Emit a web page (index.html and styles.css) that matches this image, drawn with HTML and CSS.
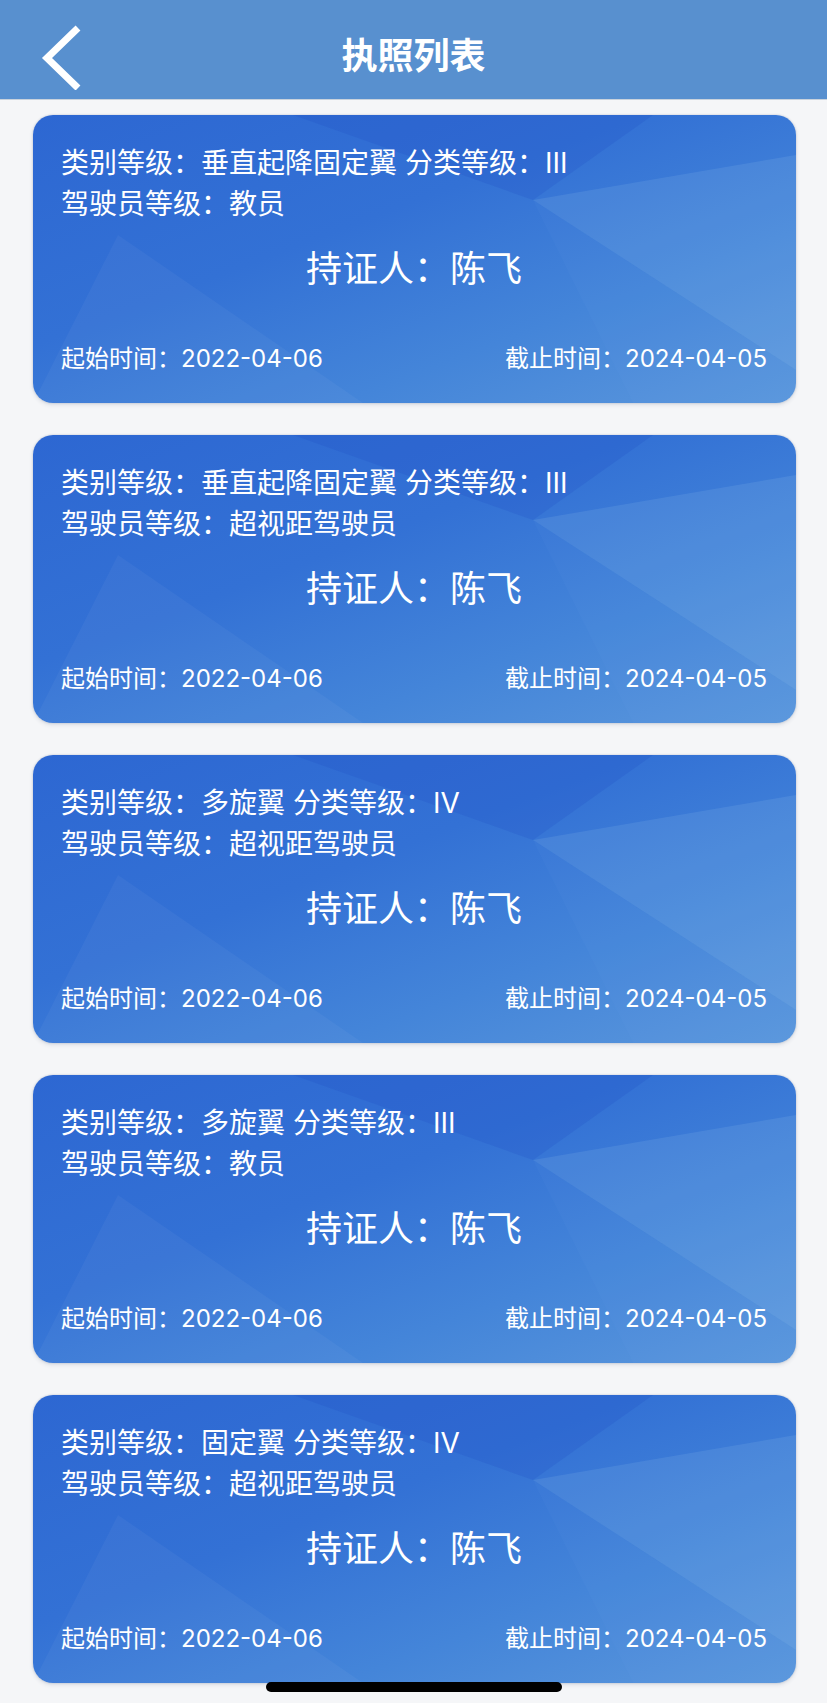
FILE: index.html
```html
<!DOCTYPE html>
<html lang="zh-CN">
<head>
<meta charset="utf-8">
<title>执照列表</title>
<link rel="stylesheet" href="styles.css">
</head>
<body>
<header class="topbar">
  <button class="back" aria-label="返回">
    <svg viewBox="0 0 52 72" width="52" height="72"><polyline points="42,10 11,40 42,70" fill="none" stroke="#fff" stroke-width="7" stroke-linejoin="miter" stroke-linecap="butt"/></svg>
  </button>
  <h1 class="title">执照列表</h1>
  <span class="spacer"></span>
</header>
<main class="list">
  <section class="card">
    <svg class="card-bg" viewBox="0 0 763 288" preserveAspectRatio="none"><polygon points="260,0 620,0 500,85" fill="#1f4fc2" fill-opacity="0.22"/><polygon points="500,85 763,40 763,255" fill="#a6cef4" fill-opacity="0.14"/><polygon points="500,85 763,255 763,288 600,288" fill="#7ab0ea" fill-opacity="0.06"/><polygon points="0,288 85,120 330,288" fill="#ffffff" fill-opacity="0.04"/></svg>
    <div class="card-body">
      <p class="line">类别等级：垂直起降固定翼 分类等级：III</p>
      <p class="line">驾驶员等级：教员</p>
      <p class="holder">持证人：陈飞</p>
      <div class="dates"><span>起始时间：2022-04-06</span><span>截止时间：2024-04-05</span></div>
    </div>
  </section>
  <section class="card">
    <svg class="card-bg" viewBox="0 0 763 288" preserveAspectRatio="none"><polygon points="260,0 620,0 500,85" fill="#1f4fc2" fill-opacity="0.22"/><polygon points="500,85 763,40 763,255" fill="#a6cef4" fill-opacity="0.14"/><polygon points="500,85 763,255 763,288 600,288" fill="#7ab0ea" fill-opacity="0.06"/><polygon points="0,288 85,120 330,288" fill="#ffffff" fill-opacity="0.04"/></svg>
    <div class="card-body">
      <p class="line">类别等级：垂直起降固定翼 分类等级：III</p>
      <p class="line">驾驶员等级：超视距驾驶员</p>
      <p class="holder">持证人：陈飞</p>
      <div class="dates"><span>起始时间：2022-04-06</span><span>截止时间：2024-04-05</span></div>
    </div>
  </section>
  <section class="card">
    <svg class="card-bg" viewBox="0 0 763 288" preserveAspectRatio="none"><polygon points="260,0 620,0 500,85" fill="#1f4fc2" fill-opacity="0.22"/><polygon points="500,85 763,40 763,255" fill="#a6cef4" fill-opacity="0.14"/><polygon points="500,85 763,255 763,288 600,288" fill="#7ab0ea" fill-opacity="0.06"/><polygon points="0,288 85,120 330,288" fill="#ffffff" fill-opacity="0.04"/></svg>
    <div class="card-body">
      <p class="line">类别等级：多旋翼 分类等级：IV</p>
      <p class="line">驾驶员等级：超视距驾驶员</p>
      <p class="holder">持证人：陈飞</p>
      <div class="dates"><span>起始时间：2022-04-06</span><span>截止时间：2024-04-05</span></div>
    </div>
  </section>
  <section class="card">
    <svg class="card-bg" viewBox="0 0 763 288" preserveAspectRatio="none"><polygon points="260,0 620,0 500,85" fill="#1f4fc2" fill-opacity="0.22"/><polygon points="500,85 763,40 763,255" fill="#a6cef4" fill-opacity="0.14"/><polygon points="500,85 763,255 763,288 600,288" fill="#7ab0ea" fill-opacity="0.06"/><polygon points="0,288 85,120 330,288" fill="#ffffff" fill-opacity="0.04"/></svg>
    <div class="card-body">
      <p class="line">类别等级：多旋翼 分类等级：III</p>
      <p class="line">驾驶员等级：教员</p>
      <p class="holder">持证人：陈飞</p>
      <div class="dates"><span>起始时间：2022-04-06</span><span>截止时间：2024-04-05</span></div>
    </div>
  </section>
  <section class="card">
    <svg class="card-bg" viewBox="0 0 763 288" preserveAspectRatio="none"><polygon points="260,0 620,0 500,85" fill="#1f4fc2" fill-opacity="0.22"/><polygon points="500,85 763,40 763,255" fill="#a6cef4" fill-opacity="0.14"/><polygon points="500,85 763,255 763,288 600,288" fill="#7ab0ea" fill-opacity="0.06"/><polygon points="0,288 85,120 330,288" fill="#ffffff" fill-opacity="0.04"/></svg>
    <div class="card-body">
      <p class="line">类别等级：固定翼 分类等级：IV</p>
      <p class="line">驾驶员等级：超视距驾驶员</p>
      <p class="holder">持证人：陈飞</p>
      <div class="dates"><span>起始时间：2022-04-06</span><span>截止时间：2024-04-05</span></div>
    </div>
  </section>
</main>
<div class="home-indicator"></div>
</body>
</html>
```

FILE: styles.css
```css
* { box-sizing: border-box; }
html, body { margin: 0; padding: 0; }
body {
  width: 827px;
  min-height: 1703px;
  background: #f5f6f8;
  font-family: Inter, "Noto Sans CJK SC", sans-serif;
  color: #fff;
  position: relative;
}
.topbar {
  height: 100px;
  background: #5890cf;
  border-bottom: 1px solid #c9d2dc;
  display: grid;
  grid-template-columns: 1fr auto 1fr;
  align-items: center;
}
.back {
  justify-self: start;
  margin-left: 36px;
  margin-top: 8px;
  padding: 0;
  border: 0;
  background: transparent;
  display: flex;
}
.title {
  margin: 0;
  padding-top: 7px;
  font-family: "Noto Sans CJK SC", sans-serif;
  font-size: 36px;
  font-weight: 700;
  line-height: 48px;
  color: #fff;
}
.list {
  display: flex;
  flex-direction: column;
  gap: 32px;
  padding: 15px 31px 0 33px;
}
.card {
  position: relative;
  height: 288px;
  border-radius: 20px;
  overflow: hidden;
  background: linear-gradient(to bottom right, #2d67d2 0%, #3371d5 40%, #4485d9 70%, #5b97dc 100%);
  box-shadow: 0 0 2px rgba(40, 60, 90, 0.25), 0 2px 4px rgba(40, 60, 90, 0.12);
}
.card-bg {
  position: absolute;
  inset: 0;
  width: 100%;
  height: 100%;
}
.card-body {
  position: relative;
  padding: 28px 29px 0 28px;
  display: flex;
  flex-direction: column;
}
.line {
  margin: 0;
  font-size: 28px;
  line-height: 40px;
  white-space: nowrap;
}
.line + .line {
  margin-top: 1px;
}
.holder {
  margin: 21px 0 0;
  font-size: 36px;
  line-height: 48px;
  text-align: center;
}
.dates {
  margin-top: 49px;
  display: flex;
  justify-content: space-between;
  font-size: 24px;
  line-height: 34px;
  white-space: nowrap;
}
.home-indicator {
  position: absolute;
  left: 266px;
  top: 1682px;
  width: 296px;
  height: 10px;
  border-radius: 5px;
  background: #000;
}
```
